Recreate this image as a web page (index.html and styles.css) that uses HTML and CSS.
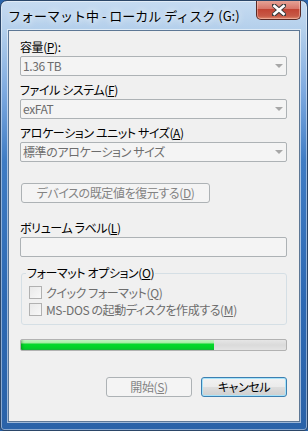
FILE: index.html
```html
<!DOCTYPE html>
<html lang="ja">
<head>
    <meta charset="UTF-8">
    <title>フォーマット中 - ローカル ディスク (G:)</title>
    <link rel="stylesheet" href="styles.css">
</head>
<body>
    <div class="window">
        <div class="titlebar">
            <span class="title">フォーマット中 - ローカル ディスク (G:)</span>
            <button class="close" title="閉じる">
                <svg width="14" height="12" viewBox="0 0 14 12">
                    <path d="M2 1.5 L12 10.5 M12 1.5 L2 10.5" stroke="#3b3b3b" stroke-width="4.6" stroke-linecap="square"/>
                    <path d="M2.4 2 L11.6 10 M11.6 2 L2.4 10" stroke="#fff" stroke-width="2.6" stroke-linecap="square"/>
                </svg>
            </button>
        </div>

        <div class="client">
            <div class="label first">容量(<u>P</u>):</div>
            <div class="combo"><span>1.36 TB</span><i class="arrow"></i></div>

            <div class="label">ファイル システム(<u>F</u>)</div>
            <div class="combo"><span>exFAT</span><i class="arrow"></i></div>

            <div class="label">アロケーション ユニット サイズ(<u>A</u>)</div>
            <div class="combo"><span>標準のアロケーション サイズ</span><i class="arrow"></i></div>

            <button class="btn restore" disabled>デバイスの既定値を復元する(<u>D</u>)</button>

            <div class="label volume">ボリューム ラベル(<u>L</u>)</div>
            <div class="textbox"></div>

            <fieldset class="group">
                <legend>フォーマット オプション(<u>O</u>)</legend>
                <div class="check"><span class="box"></span>クイック フォーマット(<u>Q</u>)</div>
                <div class="check"><span class="box"></span>MS-DOS の起動ディスクを作成する(<u>M</u>)</div>
            </fieldset>

            <div class="progress"><div class="fill" style="width: 73%"></div></div>

            <div class="actions">
                <button class="btn" disabled>開始(<u>S</u>)</button>
                <button class="btn default">キャンセル</button>
            </div>
        </div>
    </div>
</body>
</html>
```

FILE: styles.css
```css
body {
    margin: 0;
    padding: 0;
    background-color: #2a64ab;
}

.window {
    box-sizing: border-box;
    width: 308px;
    height: 431px;
    border: 1px solid #2b4668;
    border-radius: 7px 7px 4px 4px;
    background: linear-gradient(#c6dbf1 0, #b3cfeb 30px, #7eaae0 90px, #3f7cc4 160px, #2d69b3 300px, #2a62a8 100%);
    box-shadow: inset 0 0 0 1px rgba(255, 255, 255, 0.45);
    overflow: hidden;
}

.titlebar {
    display: flex;
    height: 29px;
}

.title {
    align-self: center;
    padding-left: 7px;
    font-family: "Noto Sans CJK JP", sans-serif;
    font-size: 13px;
    line-height: 16px;
    color: #000;
    text-shadow: 0 0 6px rgba(255, 255, 255, 0.9), 0 0 10px rgba(255, 255, 255, 0.7);
}

.close {
    align-self: flex-start;
    margin-left: auto;
    margin-right: 6px;
    margin-top: -1px;
    width: 45px;
    height: 20px;
    padding: 0;
    border: 1px solid #5a2a25;
    border-top: none;
    border-radius: 0 0 5px 5px;
    background: linear-gradient(#e7a89b 0, #d8776a 45%, #c24534 50%, #c75a47 85%, #e18d6f 100%);
    box-shadow: inset 0 0 0 1px rgba(255, 210, 200, 0.45);
    display: flex;
    align-items: center;
    justify-content: center;
}

.client {
    box-sizing: border-box;
    height: 392px;
    margin: 0 7px;
    padding: 8px 12px 0 11px;
    border: 1px solid #5d7795;
    background-color: #f0f0f0;
    box-shadow: 0 0 0 1px rgba(255, 255, 255, 0.55);
    font-family: "Noto Sans CJK JP", sans-serif;
    font-feature-settings: "palt";
    font-size: 12px;
    line-height: 16px;
    letter-spacing: -0.4px;
    color: #000;
}

.label {
    height: 16px;
    margin-top: 6px;
    white-space: nowrap;
}

.label.first {
    margin-top: 0;
}

.label.volume {
    margin-top: 17px;
}

.combo {
    box-sizing: border-box;
    display: flex;
    align-items: center;
    height: 20px;
    margin-top: 1px;
    padding: 0 3px 0 2px;
    border: 1px solid #adb2b5;
    border-radius: 2px;
    background-color: #f4f4f4;
    color: #6d6d6d;
}

.arrow {
    margin-left: auto;
    width: 0;
    height: 0;
    border-top: 4px solid #a7a7a7;
    border-left: 4px solid transparent;
    border-right: 4px solid transparent;
}

.btn {
    box-sizing: border-box;
    height: 20px;
    padding: 0;
    border: 1px solid #adb2b5;
    border-radius: 3px;
    background-color: #f4f4f4;
    font-family: "Noto Sans CJK JP", sans-serif;
    font-feature-settings: "palt";
    font-size: 12px;
    line-height: 16px;
    letter-spacing: -0.4px;
    color: #838383;
}

.btn.restore {
    display: block;
    width: 189px;
    margin: 21px 0 0 1px;
}

.btn.default {
    border-color: #3c7fb1;
    color: #000;
    background: linear-gradient(#f2f2f2 0, #ebebeb 48%, #dddddd 52%, #cfcfcf 100%);
    box-shadow: inset 0 0 0 1px #a6e3fa;
}

.textbox {
    box-sizing: border-box;
    height: 20px;
    margin-top: 1px;
    border: 1px solid #adb2b5;
    border-radius: 2px;
    background-color: #f4f4f4;
}

.group {
    margin: 8px 0 0 1px;
    padding: 0 7px 6px 7px;
    border: 1px solid #d5dfe5;
    border-radius: 3px;
}

.group legend {
    margin-left: -3px;
    padding: 0 1px;
    line-height: 16px;
}

.check {
    display: flex;
    align-items: center;
    height: 17px;
    color: #6d6d6d;
    white-space: nowrap;
}

.check:first-of-type {
    margin-top: 3px;
}

.box {
    box-sizing: border-box;
    width: 13px;
    height: 13px;
    margin-right: 4px;
    border: 1px solid #b1b1b1;
    background: linear-gradient(135deg, #e9e9e9, #f8f8f8);
}

.progress {
    box-sizing: border-box;
    height: 12px;
    margin-top: 14px;
    border: 1px solid #b2b2b2;
    border-radius: 2px;
    background: linear-gradient(#e6e6e6, #dadada 50%, #e4e4e4);
    overflow: hidden;
}

.fill {
    height: 100%;
    background: linear-gradient(#c6f5c6 0, #a2ec9f 30%, #06d82c 40%, #00d126 80%, #18b53a 100%);
    box-shadow: inset 3px 0 3px -2px rgba(0, 80, 0, 0.4);
}

.actions {
    display: flex;
    justify-content: flex-end;
    gap: 9px;
    margin-top: 26px;
}

.actions .btn {
    width: 86px;
}
```
